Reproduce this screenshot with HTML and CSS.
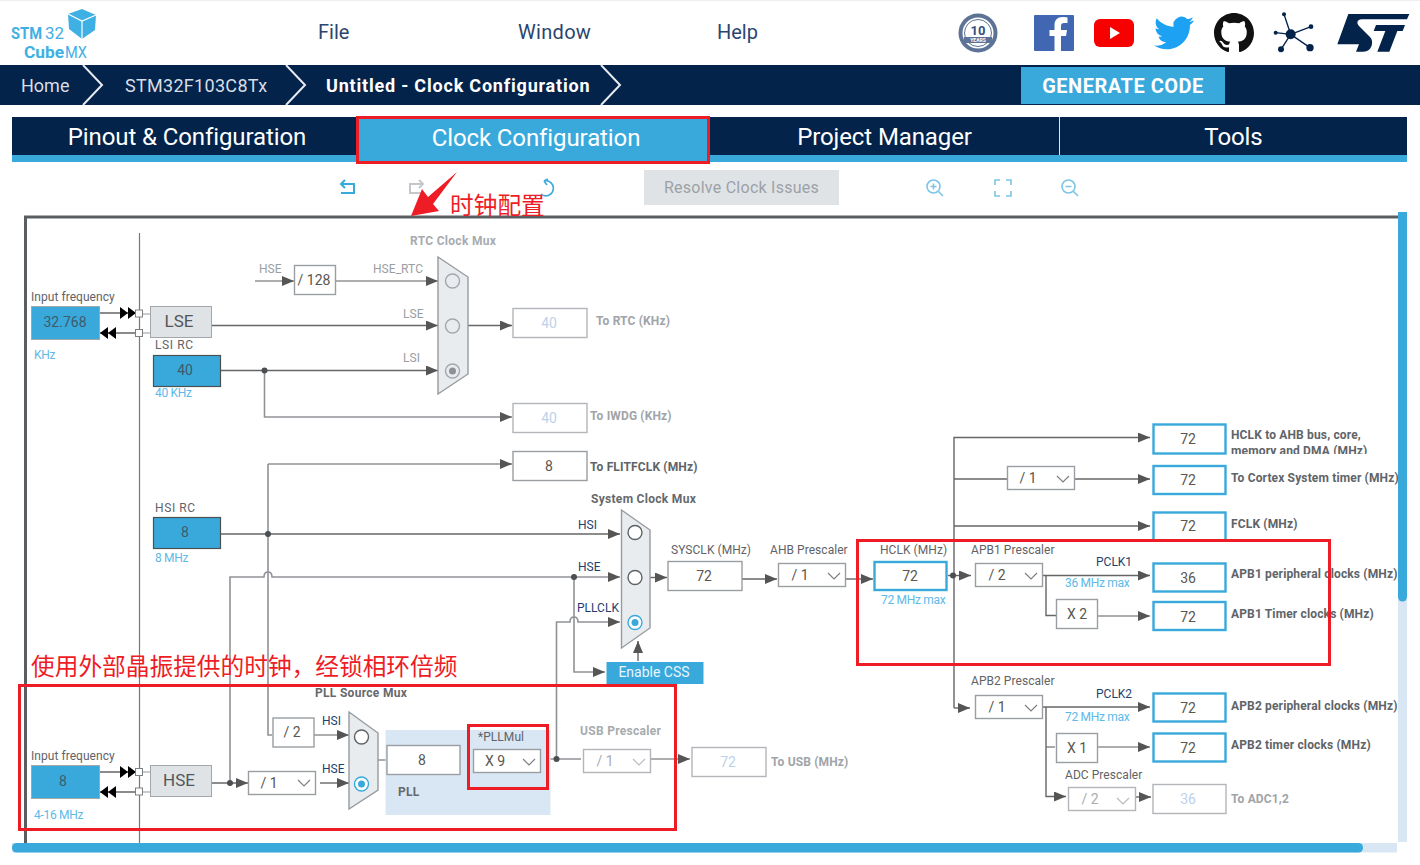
FILE: index.html
```html
<!DOCTYPE html>
<html lang="zh">
<head>
    <meta charset="UTF-8">
    <title>STM32CubeMX - Clock Configuration</title>
    <link rel="stylesheet" href="styles.css">
</head>
<body>

    <div class="top-bar">
        <svg class="logo" viewBox="0 0 100 65" width="100" height="65">
            <polygon class="cube" points="68,14 82,9 96,15 95,30 82,39 69,29"/>
            <polyline class="cube-edge" points="68,14 82,21 96,15"/>
            <line class="cube-edge" x1="82" y1="21" x2="82" y2="39"/>
            <text class="logo-bold" x="11" y="39" textLength="31" lengthAdjust="spacingAndGlyphs">STM</text>
            <text class="logo-thin" x="45" y="39" textLength="19" lengthAdjust="spacingAndGlyphs">32</text>
            <text class="logo-bold" x="24" y="58" textLength="40" lengthAdjust="spacingAndGlyphs">Cube</text>
            <text class="logo-thin" x="65" y="58" textLength="22" lengthAdjust="spacingAndGlyphs">MX</text>
        </svg>
        <div class="menu">
            <a>File</a>
            <a>Window</a>
            <a>Help</a>
        </div>
        <div class="socials">
            <svg class="badge" viewBox="0 0 40 40" width="40" height="40">
                <circle cx="20" cy="20" r="19.5" fill="#5d7396"/>
                <circle cx="20" cy="20" r="15.5" fill="#fff"/>
                <circle cx="20" cy="20" r="13.5" fill="none" stroke="#5d7396" stroke-width="1"/>
                <text class="badge-num" x="20" y="22">10</text>
                <rect x="6" y="24" width="28" height="6" fill="#5d7396"/>
                <text class="badge-small" x="20" y="29">YEARS</text>
            </svg>
            <svg viewBox="0 0 40 40" width="40" height="40">
                <rect y="2" width="40" height="36" rx="1" fill="#4267b2"/>
                <path fill="#fff" d="M27 38V23h5l1-6h-6v-4c0-2 1-3 3-3h3.500V4.500c-1-.2-3-.4-5-.4-5 0-8 3-8 8V17h-5v6h5v15z"/>
            </svg>
            <svg viewBox="0 0 40 40" width="40" height="40">
                <rect y="6" width="40" height="28" rx="6" fill="#f70000"/>
                <polygon points="16,14 16,26 26,20" fill="#fff"/>
            </svg>
            <svg viewBox="0 0 24 24" width="40" height="40">
                <path fill="#1da1f2" d="M23.953 4.570a10 10 0 01-2.825.775 4.958 4.958 0 002.163-2.723c-.951.555-2.005.959-3.127 1.184a4.920 4.920 0 00-8.384 4.482C7.690 8.095 4.067 6.130 1.640 3.162a4.822 4.822 0 00-.666 2.475c0 1.710.870 3.213 2.188 4.096a4.904 4.904 0 01-2.228-.616v.060a4.923 4.923 0 003.946 4.827 4.996 4.996 0 01-2.212.085 4.936 4.936 0 004.604 3.417 9.867 9.867 0 01-6.102 2.105c-.390 0-.779-.023-1.170-.067a13.995 13.995 0 007.557 2.209c9.053 0 13.998-7.496 13.998-13.985 0-.210 0-.420-.015-.630A9.935 9.935 0 0024 4.590z"/>
            </svg>
            <svg viewBox="0 0 16 16" width="40" height="40">
                <path fill="#111" d="M8 0C3.580 0 0 3.580 0 8c0 3.540 2.290 6.530 5.470 7.590.4.070.55-.17.55-.38 0-.19-.01-.82-.01-1.490-2.010.37-2.530-.49-2.690-.94-.09-.23-.48-.94-.82-1.130-.28-.15-.68-.52-.01-.53.63-.01 1.080.58 1.230.82.72 1.210 1.870.87 2.330.66.07-.52.28-.87.51-1.070-1.780-.2-3.640-.89-3.640-3.950 0-.87.31-1.590.82-2.150-.08-.2-.36-1.020.08-2.120 0 0 .67-.21 2.200.82.64-.18 1.320-.27 2-.27.68 0 1.360.09 2 .27 1.530-1.040 2.200-.82 2.200-.82.44 1.100.16 1.920.08 2.120.51.56.82 1.270.82 2.150 0 3.070-1.870 3.750-3.650 3.950.29.25.54.73.54 1.480 0 1.070-.01 1.930-.01 2.200 0 .21.15.46.55.38A8.013 8.013 0 0016 8c0-4.420-3.580-8-8-8z"/>
            </svg>
            <svg class="net" viewBox="30 15 135 135" width="45" height="45">
                <g stroke="#03234b" stroke-width="4">
                    <line x1="92" y1="88" x2="72" y2="28"/>
                    <line x1="92" y1="88" x2="153" y2="65"/>
                    <line x1="92" y1="88" x2="150" y2="128"/>
                    <line x1="92" y1="88" x2="63" y2="133"/>
                    <line x1="92" y1="88" x2="47" y2="83"/>
                </g>
                <g fill="#03234b">
                    <circle cx="92" cy="88" r="15"/>
                    <circle cx="72" cy="28" r="6"/>
                    <circle cx="153" cy="65" r="7"/>
                    <circle cx="150" cy="128" r="11"/>
                    <circle cx="63" cy="133" r="9"/>
                    <circle cx="47" cy="83" r="6"/>
                </g>
            </svg>
            <svg class="st" viewBox="225 15 231 135" width="77" height="45">
                <path fill="#03234b" d="M265 27H448L441 43H305C291 43 289 55 297 63L330 96C343 109 336 140 310 140H288L297 118H232Z"/>
                <path fill="#03234b" d="M348 60H435L428 78H412L388 140H352L376 78H341Z"/>
            </svg>
        </div>
    </div>

    <div class="crumbs">
        <a class="crumb crumb-home">Home</a>
        <svg class="chev" viewBox="0 0 22 40" width="22" height="40"><polyline points="1,0 20,20 1,40"/></svg>
        <a class="crumb crumb-chip">STM32F103C8Tx</a>
        <svg class="chev" viewBox="0 0 22 40" width="22" height="40"><polyline points="1,0 20,20 1,40"/></svg>
        <a class="crumb crumb-now">Untitled - Clock Configuration</a>
        <svg class="chev" viewBox="0 0 22 40" width="22" height="40"><polyline points="1,0 20,20 1,40"/></svg>
        <button class="generate">GENERATE CODE</button>
    </div>

    <div class="tabs">
        <div class="tab tab-pinout">Pinout &amp; Configuration</div>
        <div class="tab tab-clock active">Clock Configuration</div>
        <div class="tab tab-project">Project Manager</div>
        <div class="tab tab-tools">Tools</div>
    </div>

    <div class="toolbar">
        <svg class="tool tool-undo" viewBox="0 0 20 20" width="20" height="20">
            <path d="M7 2L3 6l4 4M3 6h13v9H3"/>
        </svg>
        <svg class="tool tool-redo off" viewBox="0 0 20 20" width="20" height="20">
            <path d="M13 2l4 4-4 4M17 6H4v9h13"/>
        </svg>
        <svg class="tool tool-reset" viewBox="0 0 20 20" width="20" height="20">
            <path d="M8 3a7.500 7.500 0 1 1-3 13M8 3l4-2M8 3l3 4"/>
        </svg>
        <button class="resolve">Resolve Clock Issues</button>
        <svg class="tool tool-zin" viewBox="0 0 20 20" width="20" height="20">
            <circle cx="8.500" cy="8.500" r="6.500"/><path d="M13.500 13.500L18 18M8.500 5.500v6M5.500 8.500h6"/>
        </svg>
        <svg class="tool tool-fit" viewBox="0 0 20 20" width="20" height="20">
            <path d="M7 2H2v5M13 2h5v5M7 18H2v-5M13 18h5v-5"/>
        </svg>
        <svg class="tool tool-zout" viewBox="0 0 20 20" width="20" height="20">
            <circle cx="8.500" cy="8.500" r="6.500"/><path d="M13.500 13.500L18 18M5.500 8.500h6"/>
        </svg>
    </div>

    <!-- clock tree, all coordinates are page pixels -->
    <svg class="tree" viewBox="0 205 1420 660" width="1420" height="660">
        <defs>
            <marker id="head" markerUnits="userSpaceOnUse" markerWidth="13" markerHeight="11" refX="12" refY="5" orient="auto">
                <path d="M0 0L12 5L0 10Z" fill="#555"/>
            </marker>
            <clipPath id="hclkClip"><rect x="1228" y="426" width="170" height="28"/></clipPath>
        </defs>

        <line class="frame" x1="25.500" y1="217" x2="25.500" y2="843"/>
        <line class="frame" x1="24" y1="217" x2="1398" y2="217"/>
        <line class="edge" x1="139.500" y1="233" x2="139.500" y2="843"/>

        <!-- wires -->
        <g class="wire soft">
            <path d="M255 281H294" marker-end="url(#head)"/>
            <path d="M336 281H438" marker-end="url(#head)"/>
            <path d="M264.500 371V417H512" marker-end="url(#head)"/>
            <path d="M268 464H512" marker-end="url(#head)"/>
            <path d="M268 464V735H272"/>
            <path d="M230 782V577H264Q264 572 268 572Q272 572 272 577H620" marker-end="url(#head)"/>
            <path d="M556.500 759V622H570Q570 617 574 617Q578 617 578 622H620" marker-end="url(#head)"/>
            <path d="M574 577V672H605" marker-end="url(#head)"/>
            <path d="M314 735H349" marker-end="url(#head)"/>
            <path d="M1098 616H1150" marker-end="url(#head)"/>
            <path d="M1098 747H1150" marker-end="url(#head)"/>
            <path d="M1046 747H1055"/>
            <path d="M378 760H387M460 760H473M541 759H581"/>
            <path d="M651 759H690" marker-end="url(#head)"/>
        </g>
        <g class="wire">
            <path d="M212 325.500H438" marker-end="url(#head)"/>
            <path d="M221 370.500H438" marker-end="url(#head)"/>
            <path d="M468 325.500H512" marker-end="url(#head)"/>
            <path d="M221 534H620" marker-end="url(#head)"/>
            <path d="M638 661V641" marker-end="url(#head)"/>
            <path d="M650 577.500H667" marker-end="url(#head)"/>
            <path d="M742 579H777" marker-end="url(#head)"/>
            <path d="M846 579H873" marker-end="url(#head)"/>
            <path d="M948 575.500H971" marker-end="url(#head)"/>
            <path d="M954 708V437.500H1150" marker-end="url(#head)"/>
            <path d="M954 479H1007"/>
            <path d="M1075 479H1150" marker-end="url(#head)"/>
            <path d="M954 526H1150" marker-end="url(#head)"/>
            <path d="M954 708H970" marker-end="url(#head)"/>
            <path d="M1043 575.500H1150" marker-end="url(#head)"/>
            <path d="M1046 575.500V615.500H1056"/>
            <path d="M1043 707H1150" marker-end="url(#head)"/>
            <path d="M1046 707V796.500H1066" marker-end="url(#head)"/>
            <path d="M1135 797H1151" marker-end="url(#head)"/>
            <path d="M212 783H248" marker-end="url(#head)"/>
            <path d="M320 783H349" marker-end="url(#head)"/>
            <path d="M100 313H135M100 333H135M100 772H135M100 792H135"/>
        </g>
        <g class="wire pale">
            <path d="M143 314H150M143 333H150M143 772H150M143 792H150"/>
        </g>
        <g class="dots">
            <circle cx="264.500" cy="370.500" r="3"/>
            <circle cx="268" cy="534" r="3"/>
            <circle cx="574" cy="577" r="3"/>
            <circle cx="953" cy="575.500" r="3"/>
            <circle cx="230" cy="783" r="3"/>
            <circle cx="556.500" cy="759" r="3"/>
        </g>

        <!-- oscillator pins -->
        <g class="pin-heads">
            <path d="M120 307L128 313L120 319ZM128 307L136 313L128 319Z"/>
            <path d="M100 333L108 327V339ZM108 333L116 327V339Z"/>
            <path d="M120 766L128 772L120 778ZM128 766L136 772L128 778Z"/>
            <path d="M100 792L108 786V798ZM108 792L116 786V798Z"/>
        </g>
        <g class="pins">
            <rect x="135.500" y="310" width="7" height="7"/>
            <rect x="135.500" y="329.500" width="7" height="7"/>
            <rect x="135.500" y="768.500" width="7" height="7"/>
            <rect x="135.500" y="788" width="7" height="7"/>
        </g>

        <!-- sources -->
        <rect class="source" x="31.500" y="306.500" width="68" height="33"/>
        <rect class="source" x="31.500" y="765.500" width="68" height="33"/>
        <rect class="source dark" x="153.500" y="355.500" width="67" height="31"/>
        <rect class="source dark" x="153.500" y="517.500" width="67" height="31"/>
        <rect class="osc" x="150.500" y="306.500" width="61" height="31"/>
        <rect class="osc" x="150.500" y="765.500" width="61" height="31"/>
        <text class="val mid" x="65" y="327">32.768</text>
        <text class="val mid" x="63" y="786">8</text>
        <text class="val mid" x="185" y="375">40</text>
        <text class="val mid" x="185" y="537">8</text>
        <text class="osc-txt" x="179" y="327">LSE</text>
        <text class="osc-txt" x="179" y="786">HSE</text>

        <text class="lbl" x="31" y="301">Input frequency</text>
        <text class="lbl" x="31" y="760">Input frequency</text>
        <text class="lbl wide" x="155" y="349">LSI RC</text>
        <text class="lbl wide" x="155" y="512">HSI RC</text>
        <text class="hint" x="34" y="359">KHz</text>
        <text class="hint" x="155" y="397">40 KHz</text>
        <text class="hint" x="155" y="562">8 MHz</text>
        <text class="hint" x="34" y="819">4-16 MHz</text>

        <!-- muxes -->
        <polygon class="mux" points="438,257 468,277 468,374 438,394"/>
        <polygon class="mux" points="621.500,510 650,530 650,628 621.500,648"/>
        <polygon class="mux" points="349,712 378,733 378,790 349,809"/>
        <circle class="radio off" cx="452.500" cy="281" r="7"/>
        <circle class="radio off" cx="452.500" cy="326" r="7"/>
        <circle class="radio off" cx="452.500" cy="371" r="7"/>
        <circle class="radio-dot off" cx="452.500" cy="371" r="3.500"/>
        <circle class="radio" cx="635" cy="532.500" r="7"/>
        <circle class="radio" cx="635" cy="577.500" r="7"/>
        <circle class="radio on" cx="635" cy="622.500" r="7"/>
        <circle class="radio-dot" cx="635" cy="622.500" r="3.500"/>
        <circle class="radio" cx="361.500" cy="737" r="7"/>
        <circle class="radio on" cx="361.500" cy="784" r="7"/>
        <circle class="radio-dot" cx="361.500" cy="784" r="3.500"/>

        <text class="head off" x="410" y="245">RTC Clock Mux</text>
        <text class="head" x="591" y="503">System Clock Mux</text>
        <text class="head" x="315" y="697">PLL Source Mux</text>

        <text class="lbl off" x="259" y="273">HSE</text>
        <text class="lbl off" x="373" y="273">HSE_RTC</text>
        <text class="lbl off" x="403" y="318">LSE</text>
        <text class="lbl off" x="403" y="362">LSI</text>
        <text class="sig" x="578" y="529">HSI</text>
        <text class="sig" x="578" y="571">HSE</text>
        <text class="sig" x="577" y="612">PLLCLK</text>
        <text class="sig" x="322" y="725">HSI</text>
        <text class="sig" x="322" y="773">HSE</text>

        <!-- pll block -->
        <rect class="pll" x="385.500" y="730" width="165" height="85"/>
        <text class="head" x="398" y="796">PLL</text>
        <text class="lbl" x="478" y="741">*PLLMul</text>

        <!-- plain boxes -->
        <rect class="box off" x="513" y="308.500" width="74" height="29"/>
        <rect class="box off" x="513" y="403.500" width="74" height="29"/>
        <rect class="box" x="513" y="451.500" width="74" height="29"/>
        <rect class="box" x="294.500" y="265.500" width="41" height="29"/>
        <rect class="box" x="273" y="718" width="41" height="29"/>
        <rect class="box" x="387" y="745.500" width="73" height="29"/>
        <rect class="box" x="668" y="561.500" width="74" height="29"/>
        <rect class="box off" x="692" y="747.500" width="74" height="29"/>
        <rect class="box" x="1056.500" y="599.500" width="41" height="29"/>
        <rect class="box" x="1056.500" y="733.500" width="41" height="29"/>
        <rect class="box off" x="1153" y="784.500" width="73" height="29"/>
        <text class="val off" x="549" y="328">40</text>
        <text class="val off" x="549" y="423">40</text>
        <text class="val" x="549" y="471">8</text>
        <text class="val" x="314" y="285">/ 128</text>
        <text class="val" x="292" y="737">/ 2</text>
        <text class="val" x="422" y="765">8</text>
        <text class="val" x="704" y="581">72</text>
        <text class="val off" x="728" y="767">72</text>
        <text class="val" x="1077" y="619">X 2</text>
        <text class="val" x="1077" y="753">X 1</text>
        <text class="val off" x="1188" y="804">36</text>

        <!-- blue output boxes -->
        <rect class="box out" x="1153.500" y="424.500" width="72" height="29"/>
        <rect class="box out" x="1153.500" y="466" width="72" height="28"/>
        <rect class="box out" x="1153.500" y="512.500" width="72" height="28"/>
        <rect class="box out" x="1153.500" y="563.500" width="72" height="28"/>
        <rect class="box out" x="1153.500" y="602" width="72" height="28"/>
        <rect class="box out" x="1153.500" y="693.500" width="72" height="28"/>
        <rect class="box out" x="1153.500" y="733.500" width="72" height="28"/>
        <rect class="box out" x="874.500" y="562" width="72" height="28"/>
        <text class="val" x="1188" y="444">72</text>
        <text class="val" x="1188" y="485">72</text>
        <text class="val" x="1188" y="531">72</text>
        <text class="val" x="1188" y="583">36</text>
        <text class="val" x="1188" y="622">72</text>
        <text class="val" x="1188" y="713">72</text>
        <text class="val" x="1188" y="753">72</text>
        <text class="val" x="910" y="581">72</text>

        <!-- dropdowns -->
        <g class="drop">
            <rect class="box" x="248.500" y="771.500" width="67" height="23"/>
            <text class="val" x="269" y="788">/ 1</text>
            <polyline class="arrow" points="298,780 304,786 310,780"/>
        </g>
        <g class="drop">
            <rect class="box" x="473.500" y="749.500" width="67" height="23"/>
            <text class="val" x="495" y="766">X 9</text>
            <polyline class="arrow" points="523,759 529,765 535,759"/>
        </g>
        <g class="drop off">
            <rect class="box off" x="583.500" y="749.500" width="67" height="23"/>
            <text class="val" x="605" y="766">/ 1</text>
            <polyline class="arrow" points="633,759 639,765 645,759"/>
        </g>
        <g class="drop">
            <rect class="box" x="778.500" y="563.500" width="67" height="23"/>
            <text class="val" x="800" y="580">/ 1</text>
            <polyline class="arrow" points="828,573 834,579 840,573"/>
        </g>
        <g class="drop">
            <rect class="box" x="1007.500" y="466.500" width="67" height="23"/>
            <text class="val" x="1028" y="483">/ 1</text>
            <polyline class="arrow" points="1057,476 1063,482 1069,476"/>
        </g>
        <g class="drop">
            <rect class="box" x="975.500" y="563.500" width="67" height="23"/>
            <text class="val" x="997" y="580">/ 2</text>
            <polyline class="arrow" points="1025,573 1031,579 1037,573"/>
        </g>
        <g class="drop">
            <rect class="box" x="975.500" y="695.500" width="67" height="23"/>
            <text class="val" x="997" y="712">/ 1</text>
            <polyline class="arrow" points="1025,705 1031,711 1037,705"/>
        </g>
        <g class="drop off">
            <rect class="box off" x="1068.500" y="787.500" width="67" height="23"/>
            <text class="val" x="1090" y="804">/ 2</text>
            <polyline class="arrow" points="1117,798 1123,804 1129,798"/>
        </g>

        <!-- labels -->
        <text class="lbl" x="671" y="554">SYSCLK (MHz)</text>
        <text class="lbl" x="770" y="554">AHB Prescaler</text>
        <text class="lbl" x="880" y="554">HCLK (MHz)</text>
        <text class="lbl" x="971" y="554">APB1 Prescaler</text>
        <text class="lbl" x="971" y="685">APB2 Prescaler</text>
        <text class="lbl" x="1065" y="779">ADC Prescaler</text>
        <text class="head off" x="580" y="735">USB Prescaler</text>
        <text class="hint" x="881" y="604">72 MHz max</text>
        <text class="hint" x="1065" y="587">36 MHz max</text>
        <text class="hint" x="1065" y="721">72 MHz max</text>
        <text class="sig" x="1096" y="566">PCLK1</text>
        <text class="sig" x="1096" y="698">PCLK2</text>

        <text class="out-lbl off" x="596" y="325">To RTC (KHz)</text>
        <text class="out-lbl off" x="590" y="420">To IWDG (KHz)</text>
        <text class="out-lbl" x="590" y="471">To FLITFCLK (MHz)</text>
        <text class="out-lbl off" x="771" y="766">To USB (MHz)</text>
        <g clip-path="url(#hclkClip)">
            <text class="out-lbl" x="1231" y="439">HCLK to AHB bus, core,</text>
            <text class="out-lbl" x="1231" y="455">memory and DMA (MHz)</text>
        </g>
        <text class="out-lbl" x="1231" y="482">To Cortex System timer (MHz)</text>
        <text class="out-lbl" x="1231" y="528">FCLK (MHz)</text>
        <text class="out-lbl" x="1231" y="578">APB1 peripheral clocks (MHz)</text>
        <text class="out-lbl" x="1231" y="618">APB1 Timer clocks (MHz)</text>
        <text class="out-lbl" x="1231" y="710">APB2 peripheral clocks (MHz)</text>
        <text class="out-lbl" x="1231" y="749">APB2 timer clocks (MHz)</text>
        <text class="out-lbl off" x="1231" y="803">To ADC1,2</text>

        <!-- enable css -->
        <rect class="css-btn" x="606.500" y="662" width="97" height="22"/>
        <text class="css-txt" x="654" y="677">Enable CSS</text>

        <!-- scrollbars -->
        <rect class="track" x="1398" y="212" width="9" height="630"/>
        <path class="thumb" d="M1398 212H1407V597a4.500 4.500 0 0 1-9 0Z"/>
        <rect class="track" x="12" y="843" width="1385" height="9.500"/>
        <rect class="thumb" x="12" y="843" width="1351" height="9.500" rx="4.500"/>

        <!-- annotations -->
        <text class="note" x="31" y="675">使用外部晶振提供的时钟，经锁相环倍频</text>
        <rect class="note-box" x="19.500" y="685.500" width="656" height="144"/>
        <rect class="note-box" x="468.500" y="725.500" width="79" height="63"/>
        <rect class="note-box" x="857.500" y="540.500" width="472" height="124"/>
    </svg>

    <div class="mark-tab"></div>
    <svg class="mark-arrow" viewBox="0 0 60 60" width="60" height="60">
        <polygon points="47,2 23,34 29,41 1,46 12,19 18,27"/>
    </svg>
    <div class="mark-note">时钟配置</div>

</body>
</html>
```

FILE: styles.css
```css
body {
    margin: 0;
    width: 1420px;
    height: 865px;
    overflow: hidden;
    position: relative;
    background: #fff;
    font-family: Roboto, "Liberation Sans", sans-serif;
    color: #03234b;
}

/* top bar */
.top-bar {
    height: 64px;
    border-top: 1px solid #eee;
    display: flex;
    align-items: center;
}
.logo {
    flex: none;
    margin-top: -1px;
}
.cube {
    fill: #3fb0e3;
}
.cube-edge {
    fill: none;
    stroke: #fff;
    stroke-width: 1.2;
}
.logo-bold {
    font-size: 17px;
    font-weight: 700;
    fill: #3fb0e3;
}
.logo-thin {
    font-size: 17px;
    fill: #3fb0e3;
}
.menu {
    margin-left: 218px;
    margin-top: -3px;
    display: flex;
    font-size: 20px;
    color: #2a4570;
}
.menu a {
    width: 200px;
}
.menu a:nth-child(2) {
    width: 199px;
    letter-spacing: 0.3px;
}
.menu a:last-child {
    width: 40px;
}
.socials {
    margin-left: 201px;
    display: flex;
    align-items: center;
    gap: 20px;
    margin-top: -1px;
}
.badge {
    margin-right: 16px;
}
.badge-num {
    font-size: 13px;
    font-weight: 700;
    fill: #34507c;
    text-anchor: middle;
}
.badge-small {
    font-size: 5px;
    font-weight: 700;
    fill: #fff;
    text-anchor: middle;
}
.net {
    margin-left: -4px;
}

/* breadcrumb */
.crumbs {
    height: 40px;
    background: #03234b;
    display: flex;
    align-items: center;
}
.crumb {
    color: #d9dee6;
    font-size: 18px;
    white-space: nowrap;
}
.crumb-home {
    margin-left: 21px;
    width: 61px;
}
.crumb-chip {
    margin-left: 21px;
    width: 160px;
    letter-spacing: 0.3px;
}
.crumb-now {
    margin-left: 19px;
    width: 274px;
    color: #fff;
    font-weight: 700;
    letter-spacing: 0.8px;
}
.chev {
    flex: none;
}
.chev polyline {
    fill: none;
    stroke: #e8ecf0;
    stroke-width: 2;
}
.generate {
    margin-left: 399px;
    width: 204px;
    height: 37px;
    align-self: flex-start;
    margin-top: 2px;
    border: none;
    background: #39a9dc;
    color: #fff;
    font-family: inherit;
    font-size: 20px;
    font-weight: 700;
    letter-spacing: 0.5px;
    padding: 0;
}

/* main tabs */
.tabs {
    margin: 12px 13px 0 12px;
    height: 38px;
    display: flex;
    border-bottom: 7px solid #39a9dc;
    background: #03234b;
}
.tab {
    display: flex;
    align-items: center;
    justify-content: center;
    color: #fff;
    font-size: 24px;
    letter-spacing: -0.1px;
    height: 38px;
    padding-top: 2px;
    box-sizing: border-box;
}
.tab-pinout {
    width: 345px;
    padding-left: 5px;
}
.tab-clock {
    width: 353px;
    padding-left: 5px;
}
.tab-project {
    width: 350px;
    border-right: 1px solid #dfe5ee;
}
.tab-tools {
    flex: 1;
}
.active {
    background: #39a9dc;
    height: 45px;
    padding-bottom: 5px;
}

/* toolbar */
.toolbar {
    height: 35px;
    margin-top: 8px;
    display: flex;
    align-items: center;
}
.tool {
    flex: none;
}
.tool path,
.tool circle {
    fill: none;
    stroke: #39a9dc;
    stroke-width: 1.6;
}
.tool.off path {
    stroke: #c4c8cc;
}
.tool-undo path,
.tool-redo path {
    stroke-width: 2;
}
.tool-zin path,
.tool-zin circle,
.tool-fit path,
.tool-zout path,
.tool-zout circle {
    stroke: #7cc5e8;
}
.tool-undo {
    margin-left: 338px;
}
.tool-redo {
    margin-left: 48px;
}
.tool-reset {
    margin-left: 110px;
}
.resolve {
    margin-left: 88px;
    width: 195px;
    height: 35px;
    border: none;
    background: #e0e3e6;
    color: #9ba1a7;
    font-family: inherit;
    font-size: 16px;
    letter-spacing: 0.25px;
    padding: 0;
}
.tool-zin {
    margin-left: 86px;
}
.tool-fit {
    margin-left: 48px;
}
.tool-zout {
    margin-left: 47px;
}

/* clock tree */
.tree {
    display: block;
}
.tree text {
    white-space: pre;
}
.frame {
    stroke: #5a5e60;
    stroke-width: 3;
}
.edge {
    stroke: #777;
    stroke-width: 1.2;
}
.wire path {
    fill: none;
    stroke: #666;
    stroke-width: 1.4;
}
.soft path {
    stroke: #909396;
    stroke-width: 1.6;
}
.pale path {
    stroke: #bbb;
}
.dots circle {
    fill: #4b4f52;
}
.pin-heads path {
    fill: #000;
}
.pins rect {
    fill: #fff;
    stroke: #7c8083;
    stroke-width: 1;
}
.source {
    fill: #39a9dc;
    stroke: #a2a7ab;
    stroke-width: 1;
}
.source.dark {
    stroke: #4a5155;
    stroke-width: 1.2;
}
.osc {
    fill: #e0e3e6;
    stroke: #a2a7ab;
    stroke-width: 1;
}
.osc-txt {
    font-size: 17px;
    fill: #52565a;
    text-anchor: middle;
}
.val {
    font-size: 14px;
    fill: #5a5650;
    text-anchor: middle;
}
.val.mid {
    fill: #3f5a6b;
}
.val.off {
    fill: #bcd2ea;
}
.drop.off .val {
    fill: #a9adb1;
}
.lbl {
    font-size: 12px;
    fill: #5f6367;
    letter-spacing: 0.05px;
}
.lbl.off {
    fill: #9a9ea2;
}
.lbl.wide {
    letter-spacing: 0.6px;
}
.hint {
    font-size: 12px;
    fill: #5db9e8;
    letter-spacing: -0.3px;
}
.sig {
    font-size: 12px;
    fill: #1f3f70;
}
.head {
    font-size: 12px;
    font-weight: 700;
    fill: #66696c;
    letter-spacing: 0.3px;
}
.head.off {
    fill: #a7abaf;
}
.out-lbl {
    font-size: 12px;
    font-weight: 700;
    fill: #606468;
    letter-spacing: 0.15px;
}
.out-lbl.off {
    fill: #a0a4a8;
}
.mux {
    fill: #e9ecef;
    stroke: #979b9f;
    stroke-width: 1.4;
}
.radio {
    fill: #fff;
    stroke: #5e6265;
    stroke-width: 1.4;
}
.radio.off {
    fill: #e9ecef;
    stroke: #a3a7ab;
}
.radio.on {
    stroke: #39a9dc;
}
.radio-dot {
    fill: #39a9dc;
}
.radio-dot.off {
    fill: #8e9296;
}
.pll {
    fill: #d9e7f4;
}
.box {
    fill: #fff;
    stroke: #9a9ea2;
    stroke-width: 1.4;
}
.box.off {
    stroke: #b2b6ba;
}
.box.out {
    stroke: #39a9dc;
    stroke-width: 2.4;
}
.arrow {
    fill: none;
    stroke: #7c8083;
    stroke-width: 1.2;
}
.drop.off .arrow {
    stroke: #b8bcc0;
}
.css-btn {
    fill: #39a9dc;
}
.css-txt {
    font-size: 14px;
    fill: #e8f5fc;
    text-anchor: middle;
}
.track {
    fill: #d9e7f4;
}
.thumb {
    fill: #39a9dc;
}
.note {
    font-family: "Noto Sans CJK SC", sans-serif;
    font-size: 23.700px;
    fill: #ee1c25;
}
.note-box {
    fill: none;
    stroke: #ee1c25;
    stroke-width: 3;
}

/* red markup drawn over the screenshot */
.mark-tab {
    position: absolute;
    left: 356px;
    top: 116px;
    width: 348px;
    height: 42px;
    border: 3px solid #ee1c25;
}
.mark-arrow {
    position: absolute;
    left: 410px;
    top: 170px;
}
.mark-arrow polygon {
    fill: #ee1c25;
}
.mark-note {
    position: absolute;
    left: 450px;
    top: 187px;
    font-family: "Noto Sans CJK SC", sans-serif;
    font-size: 23.700px;
    line-height: 34px;
    color: #ee1c25;
}
```
